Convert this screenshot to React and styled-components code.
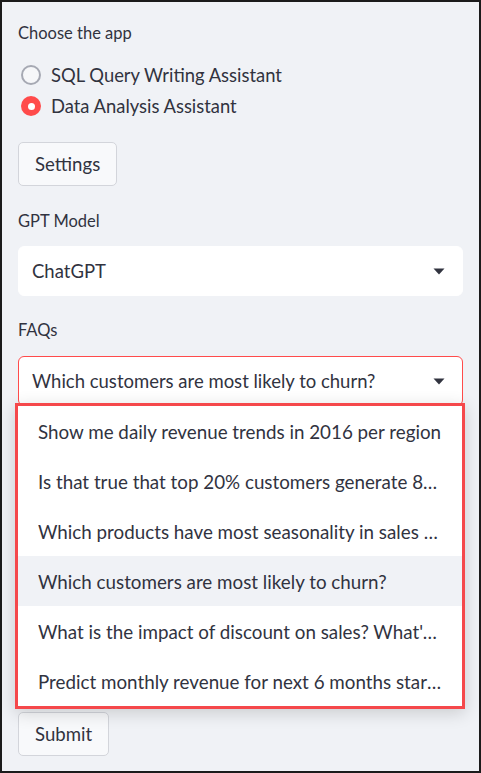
import React from "react";
import styled, { createGlobalStyle } from "styled-components";

const Global = createGlobalStyle`
  html, body { margin: 0; padding: 0; background: #f0f2f6; }
  * { box-sizing: border-box; }
  body { font-family: Lato, "Liberation Sans", sans-serif; color: #31333f; }
`;

const Frame = styled.div`
  width: 481px;
  height: 773px;
  border: 2px solid #1b1b1b;
  background: #f0f2f6;
  padding: 19px 16px 0 16px;
  display: flex;
  flex-direction: column;
  overflow: hidden;
`;

const Label = styled.div`
  font-size: 16.5px;
  line-height: 24px;
  height: 24px;
  color: #31333f;
  margin-top: ${(p) => p.$mt || 0}px;
  margin-bottom: ${(p) => p.$mb || 0}px;
`;

const RadioGroup = styled.div`
  display: flex;
  flex-direction: column;
  gap: 1px;
  margin-top: 15px;
`;

const RadioRow = styled.label`
  display: flex;
  align-items: center;
  gap: 10px;
  height: 30px;
  padding-left: 3px;
  font-size: 18.4px;
  color: #31333f;
`;

const RadioDot = styled.span`
  width: 20px;
  height: 20px;
  border-radius: 50%;
  flex: none;
  display: flex;
  align-items: center;
  justify-content: center;
  background: ${(p) => (p.$on ? "#ff4b4b" : "#f6f7f9")};
  border: ${(p) => (p.$on ? "none" : "2.5px solid #a6a9b3")};
  &::after {
    content: "";
    display: ${(p) => (p.$on ? "block" : "none")};
    width: 7px;
    height: 7px;
    border-radius: 50%;
    background: #fff;
  }
`;

const Button = styled.button`
  align-self: flex-start;
  height: 44px;
  padding: 0 16px;
  margin-top: ${(p) => p.$mt || 0}px;
  border: 1px solid #d3d5db;
  border-radius: 5px;
  background: #f8f9fb;
  font-family: inherit;
  font-size: 18.6px;
  color: #31333f;
`;

const SelectWrap = styled.div`
  position: relative;
`;

const SelectBox = styled.div`
  height: 50px;
  background: #fff;
  border-radius: 6px;
  border: 1px solid ${(p) => (p.$active ? "#ff4b4b" : "#fff")};
  display: flex;
  align-items: center;
  justify-content: space-between;
  padding: 0 17px 0 13px;
  font-size: 18.5px;
  color: #31333f;
`;

const Caret = () => (
  <svg width="12" height="7" viewBox="0 0 12 7">
    <path d="M0.5 0.5 L11.5 0.5 L6 6.5 Z" fill="#31333f" />
  </svg>
);

const Menu = styled.ul`
  position: absolute;
  left: -3px;
  right: -2px;
  top: calc(100% - 3px);
  margin: 0;
  padding: 0;
  list-style: none;
  background: #fff;
  border: 3px solid #f5484b;
  box-shadow: 0 4px 16px rgba(0, 0, 0, 0.16);
  z-index: 2;
`;

const MenuItem = styled.li`
  height: 50px;
  display: flex;
  align-items: center;
  padding: 0 18px 0 20px;
  font-size: 18.8px;
  color: #31333f;
  background: ${(p) => (p.$hl ? "#f0f2f6" : "#fff")};
  span {
    white-space: nowrap;
    overflow: hidden;
    text-overflow: ellipsis;
  }
`;

const QuestionArea = styled.div`
  height: 306px;
`;

const faqs = [
  "Show me daily revenue trends in 2016 per region",
  "Is that true that top 20% customers generate 80% revenue in 2016? What's their percentage of revenue contribution?",
  "Which products have most seasonality in sales quantity in 2016?",
  "Which customers are most likely to churn?",
  "What is the impact of discount on sales? What's optimal discount rate?",
  "Predict monthly revenue for next 6 months starting from June-2018",
];

export default function App() {
  return (
    <>
      <Global />
      <Frame>
        <Label>Choose the app</Label>
        <RadioGroup>
          <RadioRow>
            <RadioDot />
            SQL Query Writing Assistant
          </RadioRow>
          <RadioRow>
            <RadioDot $on />
            Data Analysis Assistant
          </RadioRow>
        </RadioGroup>
        <Button $mt={21}>Settings</Button>
        <Label $mt={23} $mb={13}>GPT Model</Label>
        <SelectBox>
          <span>ChatGPT</span>
          <Caret />
        </SelectBox>
        <Label $mt={22} $mb={14}>FAQs</Label>
        <SelectWrap>
          <SelectBox $active>
            <span>Which customers are most likely to churn?</span>
            <Caret />
          </SelectBox>
          <Menu>
            {faqs.map((f, i) => (
              <MenuItem key={i} $hl={i === 3}>
                <span>{f}</span>
              </MenuItem>
            ))}
          </Menu>
        </SelectWrap>
        <QuestionArea />
        <Button>Submit</Button>
      </Frame>
    </>
  );
}
